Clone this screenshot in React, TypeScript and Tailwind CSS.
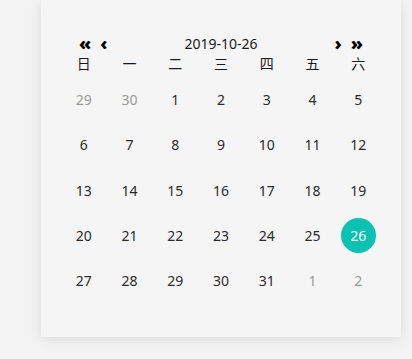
import React from "react";

const weekDays = ["日", "一", "二", "三", "四", "五", "六"];

type Day = { n: number; other?: boolean };

const days: Day[] = [
  { n: 29, other: true },
  { n: 30, other: true },
  ...Array.from({ length: 31 }, (_, i) => ({ n: i + 1 })),
  { n: 1, other: true },
  { n: 2, other: true },
];

export default function App() {
  const selected = 26;
  return (
    <div
      className="w-[412px] h-[359px] bg-[#f3f3f3] overflow-hidden"
      style={{ fontFamily: '"Noto Sans", "Noto Sans CJK SC", sans-serif' }}
    >
      <div className="ml-[41px] w-[360px] h-[337px] bg-[#f5f5f5] shadow-[0_2px_12px_rgba(0,0,0,0.1)] px-5 pt-[33px]">
        <div className="flex items-center justify-between px-[18px] h-5 text-[14px] text-[#1a1a1a]">
          <div className="flex items-center gap-[9px] font-black text-[18px] leading-none text-black">
            <span>«</span>
            <span>‹</span>
          </div>
          <span>2019-10-26</span>
          <div className="flex items-center gap-[9px] font-black text-[18px] leading-none text-black">
            <span>›</span>
            <span>»</span>
          </div>
        </div>
        <div className="grid grid-cols-7 mt-[1px] h-5 text-[14px] text-[#1a1a1a]">
          {weekDays.map((d) => (
            <div key={d} className="flex items-center justify-center leading-none">
              {d}
            </div>
          ))}
        </div>
        <div className="grid grid-cols-7 mt-[3px] text-[14px]">
          {days.map((d, i) => (
            <div key={i} className="h-[45.3px] flex items-center justify-center">
              {!d.other && d.n === selected ? (
                <span className="w-[35px] h-[35px] rounded-full bg-[#0bc1b1] text-white flex items-center justify-center">
                  {d.n}
                </span>
              ) : (
                <span className={d.other ? "text-[#9a9a9a]" : "text-[#2a2a2a]"}>{d.n}</span>
              )}
            </div>
          ))}
        </div>
      </div>
    </div>
  );
}
